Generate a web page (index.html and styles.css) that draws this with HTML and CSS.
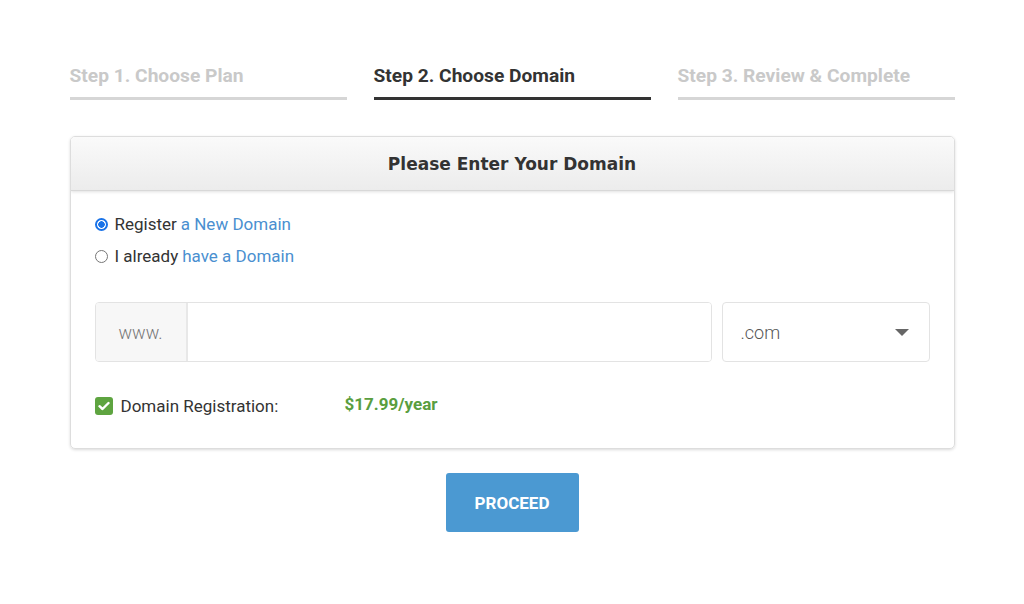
FILE: index.html
```html
<!DOCTYPE html>
<html>
<head>
<meta charset="utf-8">
<link rel="stylesheet" href="styles.css">
</head>
<body>
<div class="wrap">
  <div class="steps">
    <div class="step">Step 1. Choose Plan</div>
    <div class="step active">Step 2. Choose Domain</div>
    <div class="step">Step 3. Review &amp; Complete</div>
  </div>
  <div class="card">
    <div class="card-head">Please Enter Your Domain</div>
    <div class="card-body">
      <div class="radios">
        <label class="radio"><span class="dot on"></span>Register <span class="link">a New Domain</span></label>
        <label class="radio"><span class="dot"></span>I already <span class="link">have a Domain</span></label>
      </div>
      <div class="inputs">
        <div class="group">
          <div class="addon">www.</div>
          <div class="field"></div>
        </div>
        <div class="select">.com<span class="caret"></span></div>
      </div>
      <div class="reg">
        <span class="check"><svg width="12" height="10" viewBox="0 0 12 10"><path d="M1.5 5.2 L4.5 8 L10.5 2" fill="none" stroke="#fff" stroke-width="2.4" stroke-linecap="round" stroke-linejoin="round"/></svg></span>
        <span class="reg-label">Domain Registration:</span>
        <span class="price">$17.99/year</span>
      </div>
    </div>
  </div>
  <div class="actions"><button class="btn">PROCEED</button></div>
</div>
</body>
</html>
```
FILE: styles.css
```css
* { box-sizing: border-box; }
body { margin: 0; background: #fff; font-family: Roboto, "Liberation Sans", sans-serif; color: #333; }
.wrap { width: 885px; margin: 0 auto; padding-top: 65px; }
.steps { display: flex; gap: 27px; }
.step { flex: 1; font-size: 19.2px; font-weight: 700; color: #c9c9c9; padding-bottom: 10px; border-bottom: 3px solid #d6d6d6; line-height: 22px; }
.step.active { color: #333; border-bottom-color: #333; }
.card { margin-top: 36px; border: 1px solid #ddd; border-radius: 5px; box-shadow: 0 1px 3px rgba(0,0,0,0.15); overflow: hidden; }
.card-head { height: 54px; display: flex; align-items: center; justify-content: center; font-family: "DejaVu Sans", sans-serif; font-weight: 700; font-size: 17px; color: #333; background: linear-gradient(#fafafa, #ececec); border-bottom: 1px solid #d8d8d8; box-shadow: 0 1px 3px rgba(0,0,0,0.12); }
.card-body { padding: 24px 24px 32px 24px; }
.radios { display: flex; flex-direction: column; gap: 13px; }
.radio { display: flex; align-items: center; font-size: 17px; color: #333; line-height: 19px; }
.dot { width: 13px; height: 13px; border: 1px solid #767676; border-radius: 50%; margin-right: 7px; display: inline-block; }
.dot.on { border: 2px solid #1a73e8; background: radial-gradient(circle, #1a73e8 0 3px, #fff 3.5px); }
.link { color: #4a8fd0; margin-left: 4px; }
.inputs { display: flex; gap: 10px; margin-top: 36px; }
.group { flex: 1; display: flex; height: 60px; border: 1px solid #e3e3e3; border-radius: 4px; overflow: hidden; }
.addon { width: 92px; background: #f7f7f7; border-right: 2px solid #e8e8e8; display: flex; align-items: center; justify-content: center; font-size: 18px; color: #777; font-weight: 300; }
.field { flex: 1; background: #fff; }
.select { width: 208px; height: 60px; border: 1px solid #e3e3e3; border-radius: 4px; display: flex; align-items: center; padding: 0 20px 0 18px; font-size: 18px; color: #555; font-weight: 300; justify-content: space-between; }
.caret { width: 0; height: 0; border-left: 7px solid transparent; border-right: 7px solid transparent; border-top: 7px solid #666; }
.reg { display: flex; align-items: center; margin-top: 34px; font-size: 17px; }
.check { width: 18px; height: 18px; border-radius: 3px; background: #5ea440; display: inline-flex; align-items: center; justify-content: center; margin-right: 8px; }
.reg-label { width: 224px; color: #333; }
.price { color: #5a9e3f; font-weight: 700; margin-top: -5px; }
.actions { display: flex; justify-content: center; margin-top: 24px; }
.btn { width: 133px; height: 59px; border: none; border-radius: 3px; background: #4b99d2; color: #fff; font-family: Roboto, "Liberation Sans", sans-serif; font-weight: 700; font-size: 17px; }
```
